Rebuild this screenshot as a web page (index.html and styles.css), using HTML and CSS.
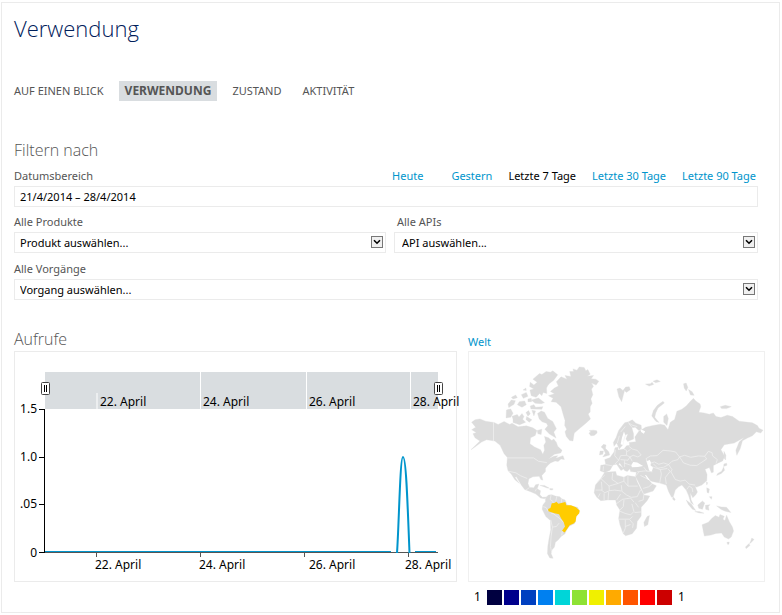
FILE: index.html
```html
<!DOCTYPE html>
<html lang="de">
<head>
<meta charset="utf-8">
<meta name="viewport" content="width=device-width, initial-scale=1">
<title>Verwendung</title>
<link rel="stylesheet" href="styles.css">
</head>
<body>
<main class="panel">
  <h1 class="title">Verwendung</h1>

  <nav class="tabs">
    <a class="tab" href="#blick">AUF EINEN BLICK</a>
    <a class="tab tab-active" href="#verwendung" aria-current="page">VERWENDUNG</a>
    <a class="tab" href="#zustand">ZUSTAND</a>
    <a class="tab" href="#aktivitaet">AKTIVITÄT</a>
  </nav>

  <form class="filters">
    <h2 class="heading">Filtern nach</h2>
    <div class="range-head">
      <label class="label" for="range">Datumsbereich</label>
      <div class="ranges">
        <a class="range range-first" href="#heute">Heute</a>
        <a class="range" href="#gestern">Gestern</a>
        <a class="range range-active" href="#7">Letzte 7 Tage</a>
        <a class="range" href="#30">Letzte 30 Tage</a>
        <a class="range" href="#90">Letzte 90 Tage</a>
      </div>
    </div>
    <input class="field" id="range" type="text" value="21/4/2014 – 28/4/2014">
    <div class="pair">
      <div class="group">
        <label class="label" for="product">Alle Produkte</label>
        <div class="select">
          <select class="field" id="product"><option>Produkt auswählen...</option></select>
          <svg class="arrow" viewBox="0 0 12 12" aria-hidden="true"><rect x=".5" y=".5" width="11" height="11"/><path d="M3 4.2l3 3 3-3"/></svg>
        </div>
      </div>
      <div class="group">
        <label class="label label-inset" for="api">Alle APIs</label>
        <div class="select">
          <select class="field field-inset" id="api"><option>API auswählen...</option></select>
          <svg class="arrow" viewBox="0 0 12 12" aria-hidden="true"><rect x=".5" y=".5" width="11" height="11"/><path d="M3 4.2l3 3 3-3"/></svg>
        </div>
      </div>
    </div>
    <div class="group">
      <label class="label" for="operation">Alle Vorgänge</label>
      <div class="select">
        <select class="field" id="operation"><option>Vorgang auswählen...</option></select>
        <svg class="arrow" viewBox="0 0 12 12" aria-hidden="true"><rect x=".5" y=".5" width="11" height="11"/><path d="M3 4.2l3 3 3-3"/></svg>
      </div>
    </div>
  </form>

  <div class="reports">
    <section>
      <div class="report-head"><h2 class="heading">Aufrufe</h2></div>
      <svg class="chart" viewBox="14 351 443 231" role="img" aria-label="Aufrufe">
        <rect class="frame" x="14.5" y="351.5" width="442" height="230"/>
        <rect class="band" x="45" y="372" width="393" height="37"/>
        <path class="split" d="M97 393V409M200.500 372V409M306.500 372V409M410.500 372V409"/>
        <g class="chart-text">
          <text x="100" y="406">22. April</text>
          <text x="203" y="406">24. April</text>
          <text x="309" y="406">26. April</text>
          <text x="413" y="406">28. April</text>
          <text x="95" y="569">22. April</text>
          <text x="199" y="569">24. April</text>
          <text x="309" y="569">26. April</text>
          <text x="405" y="569">28. April</text>
        </g>
        <g class="chart-text chart-values">
          <text x="37" y="413">1.5</text>
          <text x="37" y="461">1.0</text>
          <text x="37" y="508">.05</text>
          <text x="37" y="557">0</text>
        </g>
        <path class="axis" d="M44.500 409V553M39 409.500H45M39 457.500H45M39 504.500H45M39 552.500H45"/>
        <path class="flat" d="M45 551.500H391M415 551.500H436"/>
        <path class="base" d="M45 552.500H438M96.500 553V557M200.500 553V557M304.500 553V557M408.500 553V557"/>
        <path class="curve" d="M397 553C399 525 400 457 403 457C406 457 407.500 500 409.500 553"/>
        <g class="handle"><rect x="41.500" y="382.500" width="8" height="12" rx="1"/><path d="M44.500 385V392M46.500 385V392"/></g>
        <g class="handle"><rect x="434.500" y="382.500" width="8" height="12" rx="1"/><path d="M437.500 385V392M439.500 385V392"/></g>
      </svg>
    </section>

    <section>
      <div class="report-head"><a class="world" href="#welt">Welt</a></div>
      <svg class="map" viewBox="12 3 891 693" role="img" aria-label="Weltkarte">
        <g class="land">
          <!-- North and Central America -->
          <path d="M20 215L30 208 45 205 62 212 88 216 100 222 118 213 135 222 142 218 160 229 185 226 205 232 217 240 212 255 198 262 196 280 210 290 228 298 235 312 240 300 238 285 244 275 240 258 252 262 262 270 268 266 276 276 280 288 293 300 289 308 270 312 252 326 268 318 280 316 274 324 296 316 300 328 290 326 281 334 272 332 258 338 250 346 243 354 243 364 232 376 235 390 229 388 224 378 205 380 193 386 190 400 195 412 208 413 213 404 223 402 218 416 228 422 226 434 234 442 246 441 240 446 228 444 214 432 200 426 180 418 170 405 155 380 151 381 164 400 150 388 140 372 130 362 126 345 128 322 118 310 106 285 90 272 65 268 50 275 30 290 18 298 45 272 30 262 24 250 34 246 20 238 32 230Z"/>
          <!-- Arctic islands -->
          <path d="M205 85L225 68 232 71 245 62 258 64 265 60 280 72 268 88 255 98 250 104 246 112 247 128 236 125 232 135 225 128 215 140 200 135 196 118 208 115 195 107 197 94 208 103 218 94Z"/>
          <path d="M125 178L138 175 145 188 138 200 124 202ZM145 206L142 197 158 192 163 199 172 189 178 198 174 206 183 215 165 223 145 216ZM184 186L192 180 197 190 190 197ZM186 198L202 208 194 215 184 207ZM202 179L213 181 208 196ZM219 189L230 181 240 185 250 204 265 213 276 235 268 245 275 263 255 251 241 236 250 226 246 218 233 214 224 205ZM218 240L232 236 230 252 220 250ZM130 160L140 148 152 150 148 161 132 171ZM140 140L153 133 158 141 145 145ZM158 162L164 153 180 151 185 162 172 170ZM170 132L185 125 190 137 176 143ZM190 145L200 143 201 153 190 153ZM197 166L208 162 213 170 235 168 232 176 199 175ZM200 148L222 142 240 156 230 159 212 158ZM175 118L184 112 185 119Z"/>
          <!-- Greenland and Iceland -->
          <path d="M345 48L360 50 365 60 371 56 378 70 369 76 388 74 381 84 395 85 404 91 396 103 382 97 388 107 382 115 386 132 380 145 384 158 378 168 378 184 372 190 379 205 365 218 345 235 330 248 326 272 316 270 306 258 302 244 307 236 301 225 302 210 296 190 290 168 275 155 260 153 266 143 252 135 270 129 258 122 270 112 282 106 276 93 290 78 308 85 302 74 320 77 316 62 328 62 326 54 338 58Z"/>
          <path d="M374 248L380 245 375 240 388 239 398 241 399 248 390 255 380 256Z"/>
          <!-- Caribbean -->
          <path d="M226 406L240 406 254 414 248 414 236 409ZM256 415L266 416 264 420 256 419Z"/>
          <!-- South America -->
          <path d="M243 444L252 435 262 434 275 439 286 440 292 446 302 450 308 464 320 468 340 472 346 484 336 500 332 520 314 530 306 542 302 552 290 560 282 570 273 578 270 592 263 600 260 612 266 626 256 625 249 612 250 590 254 565 259 540 258 512 244 500 233 478 235 465 243 455Z"/>
          <!-- Africa and Madagascar -->
          <path d="M422 366L455 364 458 375 480 381 490 376 515 380 520 395 532 420 540 435 558 438 550 452 532 472 532 498 520 515 518 535 505 552 485 558 478 552 468 525 464 505 468 480 458 465 455 450 430 450 410 452 398 442 390 428 394 405 410 385ZM550 500L557 497 552 525 542 530 540 518Z"/>
          <!-- Scandinavia, Britain, Ireland -->
          <path d="M448 276L456 262 464 240 482 217 494 214 505 208 516 218 532 224 533 237 525 240 514 230 504 232 509 250 509 266 491 273 486 266 492 250 484 254 479 272 476 284 466 296 458 278 450 288ZM418 296L411 290 418 282 426 284 424 294 434 304 437 314 416 320 424 309ZM408 302L418 302 416 312 406 314Z"/>
          <!-- Eurasia -->
          <path d="M513 260L525 242 538 235 545 230 568 225 590 221 603 224 613 238 620 215 633 207 640 182 655 176 668 166 678 155 690 143 697 151 710 160 712 168 706 185 722 187 738 191 750 187 758 198 773 201 792 194 808 198 828 212 843 214 868 217 883 225 888 233 900 239 893 248 880 244 868 256 853 263 838 271 831 295 821 315 818 300 828 275 843 261 813 278 783 283 773 298 784 318 778 332 765 338 750 346 750 366 744 368 738 352 725 357 731 373 730 392 715 405 700 411 695 409 702 426 697 434 688 443 680 428 683 450 690 464 682 458 675 436 668 420 655 405 645 410 635 420 629 440 624 442 615 425 608 405 598 402 588 399 565 394 553 387 565 401 578 407 568 423 540 432 528 405 515 378 518 366 500 364 498 356 490 364 482 361 476 350 467 338 464 342 480 356 471 361 458 342 447 344 438 360 422 367 408 362 410 345 425 343 422 328 438 322 450 305 453 292 462 291 462 299 480 296 488 286 497 285 496 276 516 274Z"/>
          <!-- Northern islands of Eurasia -->
          <path d="M459 115L468 112 477 119 485 109 496 108 499 117 487 125 482 119 478 134 473 153 465 139ZM564 196L569 180 581 164 598 152 602 157 583 172 576 187 573 200 586 216 577 213ZM600 198L609 190 614 204 610 225 600 215ZM545 100L560 99 565 94 570 101 556 106ZM568 91L580 87 590 92 576 96ZM660 99L668 97 673 110 668 121 662 112ZM675 116L686 123 692 134 681 133ZM771 168L786 164 804 168 790 174 775 174Z"/>
          <!-- Japan, South-East Asia -->
          <path d="M782 303L788 315 787 329 783 325ZM782 341L790 339 791 345 781 349ZM781 350L784 360 774 370 760 376 763 370 775 363ZM729 395L733 398 730 405ZM628 440L635 448 632 452 627 447ZM668 450L684 463 697 482 687 478 675 464ZM694 485L708 485 722 490 707 489ZM703 465L717 453 724 459 717 478 706 475ZM726 466L740 464 735 470 737 481 727 478ZM730 413L738 417 736 429 731 427ZM738 440L746 440 744 448ZM760 468L774 471 790 472 803 488 786 484 774 479Z"/>
          <!-- Australia, New Zealand -->
          <path d="M716 525L735 517 745 506 756 497 767 502 770 494 783 499 779 508 785 512 790 496 798 515 808 532 811 544 804 562 796 568 783 562 775 550 758 551 743 556 723 559 720 546ZM791 578L798 577 797 584 793 584ZM866 565L873 569 865 578 859 582 863 574ZM857 582L861 587 849 597 847 592Z"/>
        </g>
        <!-- Seas within the continents -->
        <path class="sea" d="M502 345L508 335 520 337 538 347 522 350 504 351ZM548 333L558 329 562 338 560 345 568 352 564 364 556 361 552 346ZM543 374L548 376 559 391 552 389ZM480 243L484 254 480 274 476 284 470 282 474 262ZM530 236L544 242 540 250 532 245Z"/>
        <g class="border">
          <path d="M86 215V272M128 323H207L222 333 247 337M130 363L154 368 168 377 188 385M184 420L194 413M212 424L216 416"/>
          <path d="M260 435L257 448 266 455 266 468M277 440L274 454M292 446L291 458M236 470L245 473 251 484M260 490L268 492 286 506 298 518M259 510L264 532 276 530 284 520M264 532L260 560 258 590 262 610M294 544L292 557"/>
          <path d="M550 337L547 325 560 317 580 316 598 300 621 302 636 305 648 320 643 328 625 333 615 343 600 338 585 342 572 335 560 339M648 320L663 315 682 321 705 317 724 318 730 326 718 334 700 346 680 345 660 338ZM724 318L735 303 746 307 748 317 762 328 758 340"/>
          <path d="M615 343L625 358 622 365 635 388 650 393 665 390 677 402 695 405M565 350L590 358 610 355M590 358L593 372 588 398M612 356L620 363 605 382 608 402M520 365L545 362 566 365M540 351L550 364M530 376L550 386M515 378L525 366M566 400L555 410 538 415M568 340L582 354 600 351 615 343M670 418L677 408 686 414 688 426"/>
          <path d="M495 288L505 296 520 300 532 314 522 320 508 315 498 320M480 296L488 300 488 315 470 316 464 330 452 342M488 315L498 320 492 330 470 328M498 320L505 333M480 338L500 345M500 297L490 304M454 298L452 316 464 330M425 343L445 347M418 348L417 363M482 330L482 350"/>
          <path d="M484 255L477 275M466 256L460 278M484 228L470 245M495 220L506 232M492 216L505 224 520 228"/>
          <path d="M446 368L444 388 462 400 480 393V381M492 378V408H522M422 375L398 397M410 385L435 408 445 405 462 400M394 420H414L412 395M480 393L492 408M472 405L474 424 488 435 502 442 520 440 530 420M435 408L436 422 452 420 472 423M412 420L422 428 436 422M402 442L408 430M420 450V430M432 450L434 425M458 450L470 432M456 462L476 448 500 444 510 456M514 458L524 472M480 450L478 470 466 482M466 483L482 490 500 495 510 485 504 462M464 508H498L506 500M484 510V535L478 550M498 510L508 522 506 534M484 530L500 524M512 488L532 486M540 435L538 450 524 454"/>
        </g>
        <path class="active" d="M276 455L282 461 303 456 306 466 320 466 335 472 346 482 345 490 336 500 334 515 328 521 316 526 308 538 301 548 293 543 302 530 298 517 290 505 284 493 270 490 252 484 251 477 258 474 262 460 270 459Z"/>
      </svg>
      <div class="legend">
        <span class="legend-text">1</span>
        <span class="swatch c1"></span><span class="swatch c2"></span><span class="swatch c3"></span><span class="swatch c4"></span><span class="swatch c5"></span><span class="swatch c6"></span><span class="swatch c7"></span><span class="swatch c8"></span><span class="swatch c9"></span><span class="swatch c10"></span><span class="swatch c11"></span>
        <span class="legend-text">1</span>
      </div>
    </section>
  </div>
</main>
</body>
</html>
```
FILE: styles.css
```css
* { box-sizing: border-box; }

body {
  margin: 2px 2px 0 1px;
  background: #fff;
  color: #555;
  font: 11px/16px "Noto Sans", "Open Sans", sans-serif;
}

a { color: #0095cc; text-decoration: none; }

.panel {
  border: 1px solid #ebebeb;
  padding: 8px 14px 7px 12px;
}

.title {
  margin: 0;
  color: #00205b;
  font: 300 22px/34px "Open Sans", sans-serif;
}

.tabs {
  display: flex;
  gap: 9px;
  margin: 36px 0 0 -6px;
}

.tab {
  padding: 0 6px;
  color: #555;
  line-height: 20px;
}

.tab-active {
  background: #d9dde0;
  font-size: 12px;
  font-weight: 700;
}

.filters {
  margin: 36px 7px 0 0;
}

.heading {
  margin: 0;
  font: 300 16px/26px "Open Sans", sans-serif;
}

.range-head {
  display: flex;
  justify-content: space-between;
  margin: 5px 0 2px;
}

.ranges {
  display: flex;
  gap: 16px;
  padding-right: 2px;
}

.range-first { margin-right: 12px; }
.range-active { color: #000; }

.field {
  display: block;
  width: 100%;
  height: 21px;
  margin: 0;
  padding: 0 5px;
  border: 1px solid #ebebeb;
  border-radius: 0;
  background: #fff;
  color: #000;
  font: inherit;
  appearance: none;
}

.pair {
  display: grid;
  grid-template-columns: 372fr 364fr;
  gap: 8px;
  margin: 7px 0 8px;
}

.label { display: block; }
.group .label { margin-bottom: 2px; }
.label-inset { padding-left: 3px; }
.field-inset { padding-left: 7px; }

.select { position: relative; }

.arrow {
  position: absolute;
  top: 4px;
  right: 3px;
  width: 12px;
  height: 12px;
  pointer-events: none;
}

.arrow rect { fill: #f0f0f0; stroke: #777; }
.arrow path { fill: none; stroke: #000; stroke-width: 1.6; }

.reports {
  display: grid;
  grid-template-columns: 443fr 297fr;
  gap: 11px;
  margin-top: 26px;
}

.report-head { height: 25px; }

.world {
  display: block;
  padding-top: 8px;
}

.chart, .map { display: block; width: 100%; overflow: visible; }

.frame { fill: none; stroke: #ebebeb; }
.band { fill: #d9dde0; }
.split { stroke: #fff; }
.axis { stroke: #000; fill: none; }
.base { stroke: #555; }
.flat { stroke: #0095cc; }
.curve { stroke: #0095cc; stroke-width: 2; fill: none; }
.handle rect { fill: #fff; stroke: #444; }
.handle path { stroke: #000; }
.chart-text { fill: #000; font-size: 12px; }
.chart-values { text-anchor: end; }

.map { border: 1px solid #f0f0f0; }
.land { fill: #dcdcdc; stroke: #dcdcdc; stroke-width: 1; }
.sea { fill: #fff; }
.border { fill: none; stroke: #f3f3f3; stroke-width: 2; }
.active { fill: #fc0; }

.legend {
  display: flex;
  align-items: center;
  gap: 2px;
  margin: 7px 0 0 6px;
  color: #000;
  font-size: 12px;
}

.legend-text { width: 11px; }
.legend-text:last-child { padding-left: 4px; }
.swatch { width: 15px; height: 15px; }
.c1 { background: #000040; }
.c2 { background: #00008c; }
.c3 { background: #0040c0; }
.c4 { background: #0080f0; }
.c5 { background: #00d5d8; }
.c6 { background: #8ee234; }
.c7 { background: #f0f000; }
.c8 { background: #fa0; }
.c9 { background: #f50; }
.c10 { background: #f00; }
.c11 { background: #c00; }
```
